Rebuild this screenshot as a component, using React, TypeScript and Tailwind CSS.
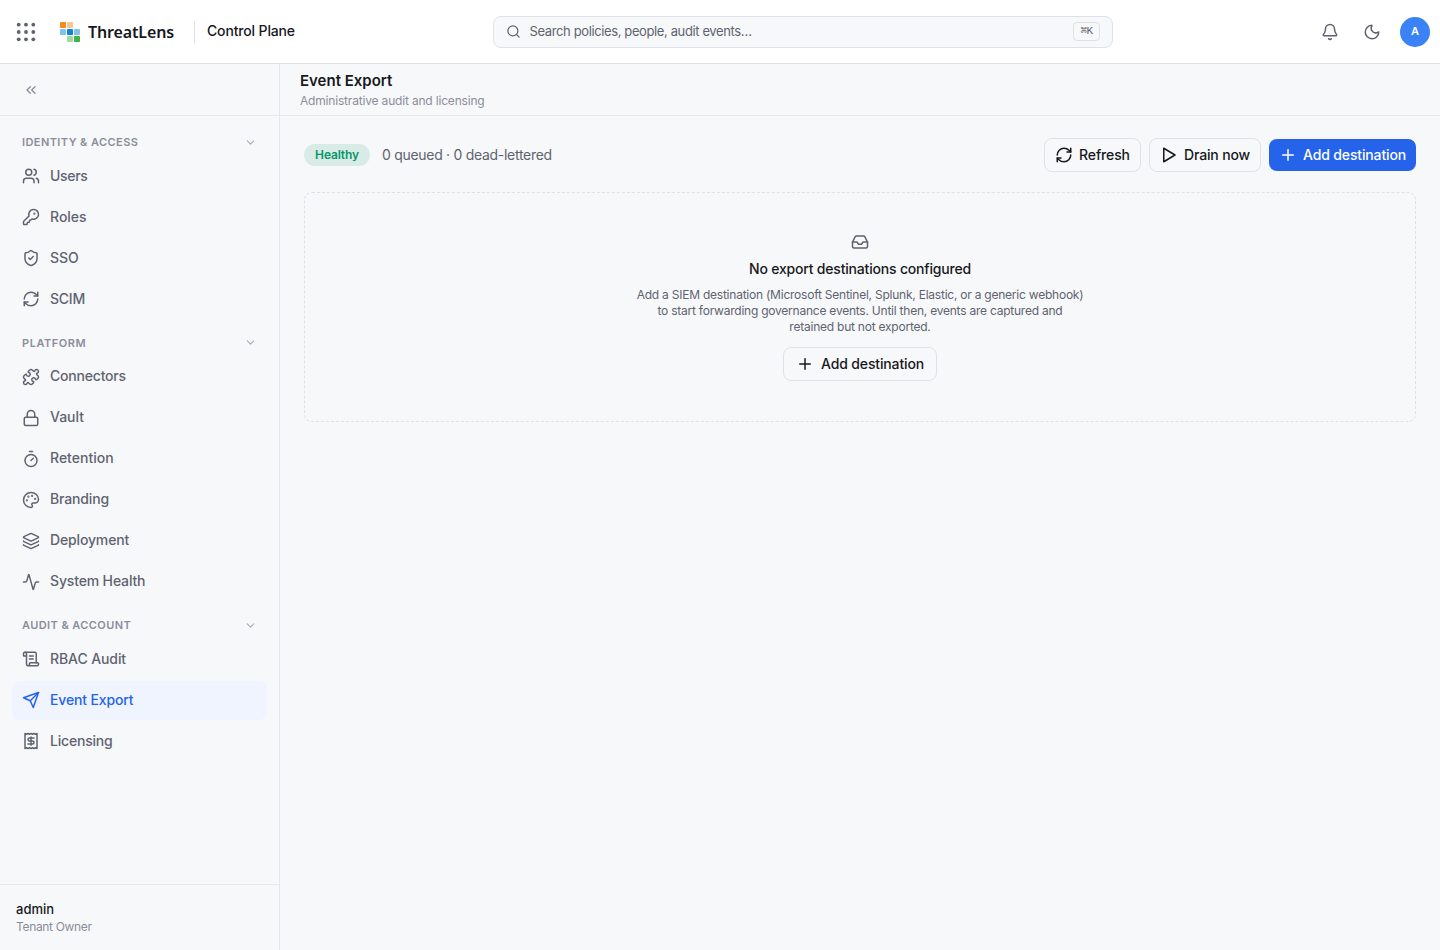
import { FC } from 'react';
import { useState } from 'react';
import {
  Activity,
  Bell,
  ChevronDown,
  ChevronsLeft,
  Inbox,
  KeyRound,
  Layers,
  Lock,
  Moon,
  Palette,
  Plus,
  Puzzle,
  Receipt,
  RefreshCw,
  ScrollText,
  Search,
  ShieldCheck,
  Timer,
  Users,
} from 'lucide-react';

type IconProps = {
  size?: number;
  strokeWidth?: number;
}

type NavItemType = {
  label: string;
  icon: FC<IconProps>;
  text: string;
};

type NavSectionType = {
  title: string;
  text: string;
  items: NavItemType[];
};

const PlayIcon: FC<IconProps> = ({ size = 18, strokeWidth = 2 }) => (
  <svg width={size} height={size} viewBox="0 0 24 24" fill="none" stroke="currentColor" strokeWidth={strokeWidth} strokeLinejoin="round">
    <polygon points="5 3 20 12 5 21" />
  </svg>
);

const SendIcon: FC<IconProps> = ({ size = 18, strokeWidth = 2 }) => (
  <svg width={size} height={size} viewBox="0 0 24 24" fill="none" stroke="currentColor" strokeWidth={strokeWidth} strokeLinecap="round" strokeLinejoin="round">
    <path d="m22 2-7 20-4-9-9-4Z" />
    <path d="M22 2 11 13" />
  </svg>
);

const AppsIcon = () => (
  <svg width="20" height="20" viewBox="0 0 20 20" fill="currentColor">
    {[2.7, 10, 17.3].map((y) =>
      [2.7, 10, 17.3].map((x) => <circle key={`${x}-${y}`} cx={x} cy={y} r="1.9" />)
    )}
  </svg>
);

const Logo = () => (
  <svg width="20" height="20" viewBox="0 0 20 20">
    <rect x="0" y="0" width="6" height="6" rx="0.8" fill="#f28c1e" />
    <rect x="7" y="0" width="6" height="6" rx="0.8" fill="#f9c592" />
    <rect x="0" y="7" width="6" height="6" rx="0.8" fill="#84c3e8" />
    <rect x="7" y="7" width="6" height="6" rx="0.8" fill="#0c87d0" />
    <rect x="14" y="7" width="6" height="6" rx="0.8" fill="#84c3e8" />
    <rect x="7" y="14" width="6" height="6" rx="0.8" fill="#a0d9a4" />
    <rect x="14" y="14" width="6" height="6" rx="0.8" fill="#3cb544" />
  </svg>
);

const sections: NavSectionType[] = [
  {
    title: 'Identity & Access',
    text: 'tracking-[0.42px]',
    items: [
      { label: 'Users', icon: Users, text: 'tracking-[-0.3px]' },
      { label: 'Roles', icon: KeyRound, text: 'tracking-normal' },
      { label: 'SSO', icon: ShieldCheck, text: 'tracking-normal' },
      { label: 'SCIM', icon: RefreshCw, text: 'tracking-[-0.25px]' },
    ],
  },
  {
    title: 'Platform',
    text: 'tracking-[0.55px]',
    items: [
      { label: 'Connectors', icon: Puzzle, text: 'tracking-[-0.2px]' },
      { label: 'Vault', icon: Lock, text: 'tracking-normal' },
      { label: 'Retention', icon: Timer, text: 'tracking-normal' },
      { label: 'Branding', icon: Palette, text: 'tracking-[-0.15px]' },
      { label: 'Deployment', icon: Layers, text: 'tracking-[-0.15px]' },
      { label: 'System Health', icon: Activity, text: 'tracking-[-0.15px]' },
    ],
  },
  {
    title: 'Audit & Account',
    text: 'tracking-[0.42px]',
    items: [
      { label: 'RBAC Audit', icon: ScrollText, text: 'tracking-[-0.1px]' },
      { label: 'Event Export', icon: SendIcon, text: 'tracking-[-0.15px]' },
      { label: 'Licensing', icon: Receipt, text: 'tracking-[-0.2px]' },
    ],
  },
];

const Header = () => (
  <header className="flex h-16 shrink-0 items-center border-b border-[#dfe1e6] bg-white">
    <div className="flex w-[493px] items-center pl-4 text-[#5f6370]">
      <AppsIcon />
      <div className="ml-6 flex items-center gap-2">
        <Logo />
        <span className="w-[86px] whitespace-nowrap font-['Noto_Sans',sans-serif] text-[16px] leading-6 font-semibold tracking-[-0.14px] text-[#17181c]">
          ThreatLens
        </span>
      </div>
      <div className="ml-5 h-[22px] w-px bg-[#dfe1e6]" />
      <span className="ml-3 pb-[2px] text-[14px] font-medium tracking-[-0.15px] text-[#17181c]">Control Plane</span>
    </div>

    <div className="flex h-8 w-[620px] items-center rounded-lg border border-[#dfe1e6] bg-[#f7f8fa] pr-3 pl-3 text-[#5f6370]">
      <Search size={15} strokeWidth={2} />
      <span className="ml-[8.5px] flex-1 pt-px text-[13px] tracking-[-0.38px]">Search policies, people, audit events…</span>
      <kbd className="flex h-[19px] w-[27px] items-center justify-center rounded border border-[#dfe1e6] font-['Liberation_Mono',monospace] text-[11px] tracking-[-0.6px]">
        ⌘K
      </kbd>
    </div>

    <div className="flex flex-1 items-center justify-end pr-[10px] text-[#5f6370]">
      <Bell size={18} strokeWidth={2} />
      <Moon className="ml-6" size={18} strokeWidth={2} />
      <div className="ml-[19px] flex h-[30px] w-[30px] items-center justify-center rounded-full bg-[#3b82f6] text-[11px] font-semibold text-white">
        A
      </div>
    </div>
  </header>
);

type NavItemProps = {
  item: NavItemType;
  active: boolean;
  handleClick: () => void;
}

const NavItem: FC<NavItemProps> = ({ item, active, handleClick }) => {
  const Icon = item.icon;

  return (
    <button
      type="button"
      className={`flex h-[39px] items-center gap-[10px] rounded-lg px-[10px] text-[14px] font-medium ${
        active ? 'bg-[#eff4ff] text-[#2563eb]' : 'text-[#5f6370]'
      }`}
      onClick={handleClick}
    >
      <Icon size={18} strokeWidth={2} />
      <span className={`pb-[2px] whitespace-nowrap ${item.text}`}>{item.label}</span>
    </button>
  );
};

const Sidebar = () => {
  const [current, setCurrent] = useState('Event Export');

  return (
    <aside className="flex w-[280px] shrink-0 flex-col border-r border-[#e5e7eb]">
      <div className="flex h-[52px] shrink-0 items-center border-b border-[#e5e7eb] pl-[23px] text-[#8b8e9a]">
        <ChevronsLeft size={16} strokeWidth={2} />
      </div>

      <nav className="flex flex-1 flex-col gap-[10.5px] px-3 pt-[12.75px]">
        {sections.map((section) => (
          <div key={section.title} className="flex flex-col gap-[2px]">
            <div className="flex h-[26px] items-center justify-between px-[10px] text-[#8b8e9a]">
              <span className={`pt-[1.5px] text-[11px] font-semibold uppercase ${section.text}`}>{section.title}</span>
              <ChevronDown className="mt-px text-[#a9acb5]" size={13} strokeWidth={2} />
            </div>
            {section.items.map((item) => (
              <NavItem
                key={item.label}
                item={item}
                active={item.label === current}
                handleClick={() => setCurrent(item.label)}
              />
            ))}
          </div>
        ))}
      </nav>

      <div className="flex h-[66px] shrink-0 flex-col border-t border-[#e5e7eb] px-4 pt-[15px]">
        <span className="text-[13px] leading-[18px] font-medium text-[#17181c]">admin</span>
        <span className="text-[12px] leading-[18px] tracking-[-0.33px] text-[#8b8e9a]">Tenant Owner</span>
      </div>
    </aside>
  );
};

const EmptyState = () => (
  <div className="flex h-[230px] flex-col items-center rounded-lg border border-dashed border-[#dfe1e6] pt-10 text-center">
    <Inbox className="text-[#5f6370]" size={18} strokeWidth={2} />
    <h2 className="mt-2 text-[14px] leading-5 font-medium tracking-[-0.19px] text-[#17181c]">
      No export destinations configured
    </h2>
    <p className="mt-2 flex flex-col text-[12px] leading-4 tracking-[-0.23px] text-[#5f6370]">
      <span>Add a SIEM destination (Microsoft Sentinel, Splunk, Elastic, or a generic webhook)</span>
      <span>to start forwarding governance events. Until then, events are captured and</span>
      <span>retained but not exported.</span>
    </p>
    <button
      type="button"
      className="mt-3 flex h-[34px] w-[154px] items-center justify-center gap-[7px] rounded-lg border border-[#dfe1e6] text-[14px] font-medium tracking-[-0.14px] text-[#17181c]"
    >
      <Plus size={18} strokeWidth={2} />
      <span className="pb-[2px]">Add destination</span>
    </button>
  </div>
);

const App = () => {
  return (
    <div className="flex h-[950px] w-[1440px] flex-col overflow-hidden bg-[#f7f8fa] font-['Inter',sans-serif]">
      <Header />
      <div className="flex min-h-0 flex-1">
        <Sidebar />
        <main className="flex flex-1 flex-col">
          <div className="flex h-[52px] shrink-0 flex-col border-b border-[#e5e7eb] px-5 pt-[6px]">
            <h1 className="text-[15px] leading-[21px] font-semibold text-[#17181c]">Event Export</h1>
            <p className="text-[12px] leading-5 tracking-[-0.18px] text-[#8b8e9a]">Administrative audit and licensing</p>
          </div>

          <div className="flex flex-col gap-5 px-6 pt-[22px]">
            <div className="flex h-[34px] items-center">
              <span className="flex h-[22px] w-[66px] items-center justify-center rounded-full bg-[#d9ebe6] text-[12px] font-semibold tracking-[-0.15px] text-[#059669]">
                Healthy
              </span>
              <span className="ml-3 flex-1 pb-[2px] text-[14px] tracking-[-0.29px] text-[#5f6370]">
                0 queued · 0 dead-lettered
              </span>
              <div className="flex items-center gap-2 text-[14px] font-medium tracking-[-0.14px] text-[#17181c]">
                <button type="button" className="flex h-[34px] w-[97px] items-center justify-center gap-[6px] rounded-lg border border-[#dfe1e6]">
                  <RefreshCw size={18} strokeWidth={2} />
                  <span className="pb-[2px]">Refresh</span>
                </button>
                <button type="button" className="flex h-[34px] w-[112px] items-center justify-center gap-[6px] rounded-lg border border-[#dfe1e6]">
                  <PlayIcon />
                  <span className="pb-[2px]">Drain now</span>
                </button>
                <button type="button" className="flex h-8 w-[147px] items-center justify-center gap-[6px] rounded-lg bg-[#2563eb] text-white">
                  <Plus size={18} strokeWidth={2} />
                  <span className="pb-[2px]">Add destination</span>
                </button>
              </div>
            </div>
            <EmptyState />
          </div>
        </main>
      </div>
    </div>
  );
};

export default App;
